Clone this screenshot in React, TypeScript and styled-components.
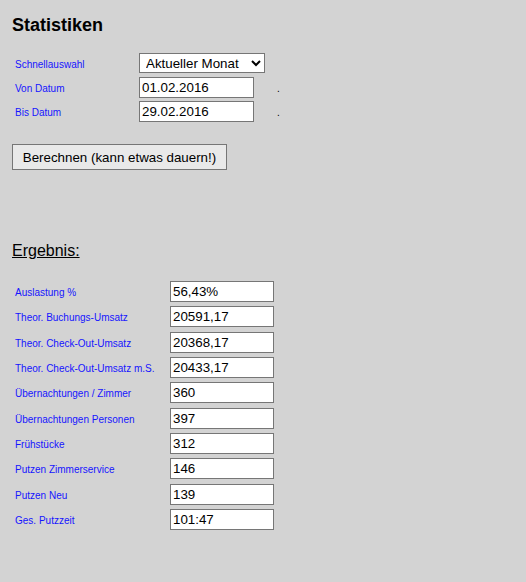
import React from "react";
import styled, { createGlobalStyle } from "styled-components";

const Global = createGlobalStyle`
  html, body {
    margin: 0;
    padding: 0;
    background: #d3d3d3;
    font-family: "Liberation Sans", Arial, sans-serif;
  }
`;

const Page = styled.div`
  padding: 15px 12px 20px 12px;
  min-height: 582px;
  box-sizing: border-box;
  background: #d3d3d3;
`;

const Title = styled.h1`
  margin: 0;
  font-size: 18px;
  line-height: 21px;
  font-weight: bold;
  color: #000;
`;

const FormGrid = styled.div`
  display: grid;
  grid-template-columns: 124px 126px 1fr;
  row-gap: 3.5px;
  margin: 17px 0 0 3px;
  align-items: center;
`;

const Label = styled.span`
  font-size: 10px;
  color: #1515ff;
  padding-top: 3px;
  line-height: 12px;
`;

const Select = styled.select`
  width: 126px;
  height: 20px;
  box-sizing: border-box;
  font-family: "Liberation Sans", Arial, sans-serif;
  font-size: 13.33px;
  color: #000;
  background: #fff;
  border: 1px solid #767676;
  border-radius: 0;
  padding: 0 0 0 2px;
  margin: 0;
`;

const TextInput = styled.input<{ $w: number }>`
  width: ${(p) => p.$w}px;
  height: 21px;
  box-sizing: border-box;
  font-family: "Liberation Sans", Arial, sans-serif;
  font-size: 13.33px;
  color: #000;
  background: #fff;
  border: 1px solid #767676;
  border-radius: 0;
  padding: 0 2px;
  margin: 0;
  outline: none;
`;

const Dot = styled.span`
  font-size: 10px;
  padding-left: 12px;
  padding-top: 2px;
  color: #000;
`;

const Button = styled.button`
  display: block;
  margin-top: 22px;
  width: 215px;
  height: 26px;
  box-sizing: border-box;
  font-family: "Liberation Sans", Arial, sans-serif;
  font-size: 13.33px;
  color: #000;
  background: #e9e9e9;
  border: 1px solid #767676;
  border-radius: 0;
  padding: 0;
`;

const Heading = styled.h2`
  margin: 72px 0 0 0;
  font-size: 16px;
  line-height: 18px;
  font-weight: normal;
  text-decoration: underline;
  color: #000;
`;

const ResultGrid = styled.div`
  display: grid;
  grid-template-columns: 155px 104px;
  row-gap: 4.33px;
  margin: 21px 0 0 3px;
  align-items: center;
`;

const selectOptions = ["Aktueller Monat", "Letzter Monat", "Aktuelles Jahr", "Letztes Jahr"];

const results: [string, string][] = [
  ["Auslastung %", "56,43%"],
  ["Theor. Buchungs-Umsatz", "20591,17"],
  ["Theor. Check-Out-Umsatz", "20368,17"],
  ["Theor. Check-Out-Umsatz m.S.", "20433,17"],
  ["Übernachtungen / Zimmer", "360"],
  ["Übernachtungen Personen", "397"],
  ["Frühstücke", "312"],
  ["Putzen Zimmerservice", "146"],
  ["Putzen Neu", "139"],
  ["Ges. Putzzeit", "101:47"],
];

export default function App() {
  return (
    <>
      <Global />
      <Page>
        <Title>Statistiken</Title>
        <FormGrid>
          <Label>Schnellauswahl</Label>
          <Select defaultValue="Aktueller Monat">
            {selectOptions.map((o) => (
              <option key={o} value={o}>
                {o}
              </option>
            ))}
          </Select>
          <span />
          <Label>Von Datum</Label>
          <TextInput $w={115} defaultValue="01.02.2016" />
          <Dot>.</Dot>
          <Label>Bis Datum</Label>
          <TextInput $w={115} defaultValue="29.02.2016" />
          <Dot>.</Dot>
        </FormGrid>
        <Button>Berechnen (kann etwas dauern!)</Button>
        <Heading>Ergebnis:</Heading>
        <ResultGrid>
          {results.map(([label, value]) => (
            <React.Fragment key={label}>
              <Label>{label}</Label>
              <TextInput $w={104} defaultValue={value} readOnly />
            </React.Fragment>
          ))}
        </ResultGrid>
      </Page>
    </>
  );
}
